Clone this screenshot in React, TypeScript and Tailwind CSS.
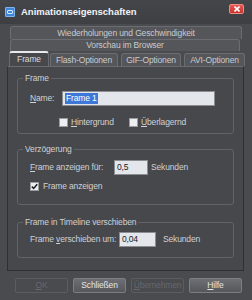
import React from "react";

function U({ children }: { children: React.ReactNode }) {
  return <span className="underline underline-offset-1">{children}</span>;
}

function Check({ checked }: { checked?: boolean }) {
  return (
    <span className="w-[9px] h-[9px] bg-[#eceef1] border border-[#9a9ca0] flex items-center justify-center shrink-0">
      {checked && (
        <svg width="7" height="7" viewBox="0 0 7 7">
          <path d="M0.8 3.6 L2.7 5.5 L6.2 1.2" fill="none" stroke="#1c1d20" strokeWidth="1.5" />
        </svg>
      )}
    </span>
  );
}

function Group({ title, className, children }: { title: string; className: string; children: React.ReactNode }) {
  return (
    <div className={`relative border border-[#626368] rounded-[3px] ${className}`}>
      <span className="absolute left-[5px] top-[-7px] px-[2px] bg-[#47484c] leading-[12px] text-[#cfd1d5] whitespace-nowrap">{title}</span>
      {children}
    </div>
  );
}

function Field({ value, w, selected }: { value: string; w: string; selected?: boolean }) {
  return (
    <span className={`${w} h-[15px] shrink-0 bg-[#e3e6eb] border border-[#8c8e93] flex items-center px-[2px] text-[#202124]`}>
      {selected ? <span className="bg-[#3d78d8] text-white px-[1px] leading-[11px]">{value}</span> : value}
    </span>
  );
}

function Tab({ label, w, active }: { label: string; w: string; active?: boolean }) {
  return (
    <div
      className={`${w} flex items-center justify-center rounded-t-[3px] border border-b-0 whitespace-nowrap ${
        active
          ? "h-[15px] bg-[#47484c] border-[#6a6b70] border-t-[#e8e9eb] border-t-2 text-[#d8dadd]"
          : "h-[13px] mt-[2px] bg-[#55565a] border-[#6c6d72] text-[#c9cbcf]"
      }`}
    >
      {label}
    </div>
  );
}

function Btn({ label, disabled }: { label: React.ReactNode; disabled?: boolean }) {
  return (
    <div
      className={`w-[53px] h-[15px] flex items-center justify-center rounded-[2px] border whitespace-nowrap ${
        disabled
          ? "border-[#5c5d61] text-[#66676b] bg-[#4a4b4f]"
          : "border-[#7d7e83] text-[#e4e5e8] bg-gradient-to-b from-[#6e6f74] to-[#56575b]"
      }`}
    >
      {label}
    </div>
  );
}

export default function App() {
  return (
    <div
      className="w-[252px] h-[300px] bg-[#4a4b4f] flex flex-col text-[8.5px] tracking-[-0.15px] text-[#cfd1d5] overflow-hidden"
      style={{ fontFamily: '"Liberation Sans", Arial, sans-serif' }}
    >
      {/* title bar */}
      <div className="h-[24px] shrink-0 flex items-start pt-[4px] pl-[5px] pr-[8px] bg-gradient-to-b from-[#45464a] to-[#3e3f43]">
        <span className="mt-[3px] w-[10px] h-[10px] rounded-[1px] bg-[#3f87d6] border border-[#7fb5ee] flex items-center justify-center">
          <span className="w-[6px] h-[4px] border border-[#d8e8fa] rounded-[1px]" />
        </span>
        <span className="ml-[6px] mt-[2px] text-[9.5px] tracking-normal font-bold text-[#f2f3f5] leading-[12px] flex-1">Animationseigenschaften</span>
        <span className="w-[15px] h-[10px] rounded-[2px] bg-gradient-to-b from-[#e85a55] to-[#c8302b] border border-[#f08a86] flex items-center justify-center">
          <svg width="6" height="6" viewBox="0 0 6 6">
            <path d="M0.5 0.5 L5.5 5.5 M5.5 0.5 L0.5 5.5" stroke="#fff" strokeWidth="1.6" />
          </svg>
        </span>
      </div>

      {/* tab rows */}
      <div className="flex flex-col pl-[10px] mt-[2px]">
        <div className="w-[232px] h-[13px] flex items-center justify-center rounded-t-[3px] border border-b-0 border-[#6c6d72] bg-[#55565a] text-[#c9cbcf]">
          Wiederholungen und Geschwindigkeit
        </div>
        <div className="w-[230px] h-[12px] flex items-center justify-center rounded-t-[3px] border border-b-0 border-[#6c6d72] bg-[#55565a] text-[#c9cbcf]">
          Vorschau im Browser
        </div>
      </div>
      <div className="flex items-end gap-[1px] pl-[9px]">
        <Tab label="Frame" w="w-[40px]" active />
        <Tab label="Flash-Optionen" w="w-[68px]" />
        <span className="w-[1px]" />
        <Tab label="GIF-Optionen" w="w-[60px]" />
        <span className="w-[1px]" />
        <Tab label="AVI-Optionen" w="w-[61px]" />
      </div>

      {/* panel */}
      <div className="ml-[7px] w-[237px] h-[205px] bg-[#47484c] border border-[#2f3033] border-t-[#6a6b70] flex flex-col px-[9px]">
        <Group title="Frame" className="mt-[11px] h-[56px]">
          <div className="flex items-center mt-[12px] pl-[12px]">
            <span className="w-[32px] whitespace-nowrap"><U>N</U>ame:</span>
            <Field value="Frame 1" w="w-[153px]" selected />
          </div>
          <div className="flex items-center mt-[10px] pl-[41px] whitespace-nowrap">
            <Check />
            <span className="ml-[3px] w-[58px]"><U>H</U>intergrund</span>
            <Check />
            <span className="ml-[3px]"><U>Ü</U>berlagernd</span>
          </div>
        </Group>

        <Group title="Verzögerung" className="mt-[15px] h-[56px]">
          <div className="flex items-center mt-[10px] pl-[12px] whitespace-nowrap">
            <span className="w-[84px]"><U>F</U>rame anzeigen für:</span>
            <Field value="0,5" w="w-[34px]" />
            <span className="ml-[3px]">Sekunden</span>
          </div>
          <div className="flex items-center mt-[5px] pl-[12px] whitespace-nowrap">
            <Check checked />
            <span className="ml-[4px]">Frame anzeigen</span>
          </div>
        </Group>

        <Group title="Frame in Timeline verschieben" className="mt-[17px] h-[36px]">
          <div className="flex items-center mt-[9px] pl-[12px] whitespace-nowrap">
            <span className="w-[89px] shrink-0">Frame <U>v</U>erschieben um:</span>
            <Field value="0,04" w="w-[37px]" />
            <span className="ml-[7px]">Sekunden</span>
          </div>
        </Group>
      </div>

      {/* buttons */}
      <div className="flex gap-[5px] pl-[15px] mt-[7px]">
        <Btn label={<span><U>O</U>K</span>} disabled />
        <Btn label={<span>Schließen</span>} />
        <Btn label={<span><U>Ü</U>bernehmen</span>} disabled />
        <Btn label={<span><U>H</U>ilfe</span>} />
      </div>
    </div>
  );
}
